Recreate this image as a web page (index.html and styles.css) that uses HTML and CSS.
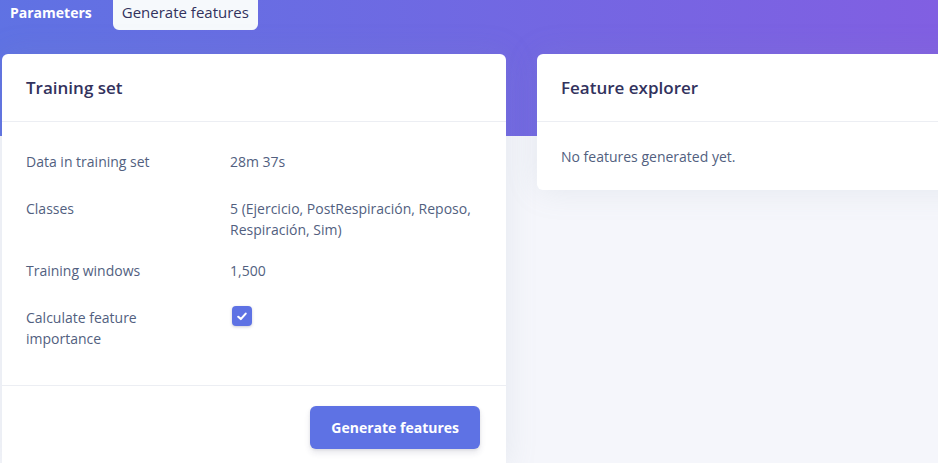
FILE: index.html
```html
<!DOCTYPE html>
<html>
<head>
<meta charset="utf-8">
<link rel="stylesheet" href="styles.css">
</head>
<body>
<div class="band">
  <nav class="tabs">
    <a class="tab">Parameters</a>
    <a class="tab active">Generate features</a>
  </nav>
</div>
<div class="cards">
  <section class="card card-left">
    <div class="card-header"><h3>Training set</h3></div>
    <div class="card-body">
      <div class="info">
        <div class="row"><div class="label">Data in training set</div><div class="value">28m 37s</div></div>
        <div class="row"><div class="label">Classes</div><div class="value">5 (Ejercicio, PostRespiración, Reposo, Respiración, Sim)</div></div>
        <div class="row"><div class="label">Training windows</div><div class="value">1,500</div></div>
        <div class="row"><div class="label">Calculate feature importance</div><div class="value"><span class="check"><svg width="10" height="9" viewBox="0 0 10 9"><path d="M1.3 4.8 L3.8 7.1 L8.7 1.6" fill="none" stroke="#fff" stroke-width="2.1" stroke-linecap="round" stroke-linejoin="round"/></svg></span></div></div>
      </div>
    </div>
    <div class="card-footer">
      <button class="btn">Generate features</button>
    </div>
  </section>
  <section class="card card-right">
    <div class="card-header"><h3>Feature explorer</h3></div>
    <div class="card-body"><p class="empty">No features generated yet.</p></div>
  </section>
</div>
</body>
</html>
```

FILE: styles.css
```css
* { box-sizing: border-box; }
html, body { margin: 0; padding: 0; }
body {
  font-family: "Open Sans", "Noto Sans", sans-serif;
  font-size: 14px;
  line-height: 21px;
  color: #525f7f;
  background: #f5f6fb;
  overflow: hidden;
  width: 938px;
  height: 463px;
}
.band {
  display: flow-root;
  height: 136px;
  background: linear-gradient(87deg, #5f72e3 0%, #815fe2 100%);
}
.tabs {
  display: flex;
  align-items: center;
  gap: 12px;
  margin-top: -6px;
  padding-left: 1px;
}
.tab {
  display: block;
  padding: 7.5px 9px;
  color: #fff;
  font-weight: 700;
  border-radius: 6px;
}
.tab.active {
  background: #f6f9fc;
  color: #32325d;
  font-size: 15px;
  font-weight: 500;
}
.cards {
  display: flex;
  gap: 31px;
  padding-left: 2px;
  margin-top: -82px;
  align-items: flex-start;
}
.card {
  flex: 0 0 504px;
  background: #fff;
  border-radius: 6px;
  box-shadow: 0 0 2rem 0 rgba(136, 152, 170, 0.15);
}
.card-header {
  padding: 21px 24px 20px;
  border-bottom: 1px solid #eceef3;
}
.card-header h3 {
  margin: 0;
  font-size: 17px;
  line-height: 26px;
  font-weight: 600;
  color: #32325d;
}
.card-body {
  padding: 24px 24px 23px;
}
.card-left .card-body {
  padding: 29px 24px 36px;
}
.info {
  display: flex;
  flex-direction: column;
  gap: 20px;
}
.row {
  display: grid;
  grid-template-columns: 204px 1fr;
  min-height: 27px;
}
.value .check {
  margin-left: 2px;
  margin-top: -1px;
}
.check {
  display: flex;
  align-items: center;
  justify-content: center;
  width: 20px;
  height: 20px;
  border-radius: 4px;
  background: #5e72e4;
  box-shadow: 0 1px 3px rgba(50, 50, 93, 0.25);
}
.label { padding-right: 20px; }
.card-footer {
  border-top: 1px solid #eceef3;
  padding: 20px 26px 20px 24px;
  display: flex;
  justify-content: flex-end;
}
.btn {
  font-family: inherit;
  font-size: 14px;
  line-height: 21px;
  font-weight: 700;
  color: #fff;
  background: #5e72e4;
  border: 0;
  border-radius: 6px;
  padding: 11px 21px;
  box-shadow: 0 4px 6px rgba(50, 50, 93, 0.11), 0 1px 3px rgba(0, 0, 0, 0.08);
}
.empty { margin: 0; }
```
